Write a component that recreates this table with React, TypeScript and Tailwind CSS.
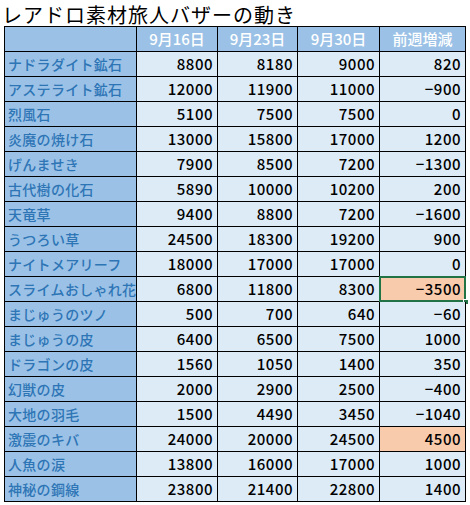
import React from "react";

const rows: [string, number, number, number, number, string?][] = [
  ["ナドラダイト鉱石", 8800, 8180, 9000, 820],
  ["アステライト鉱石", 12000, 11900, 11000, -900],
  ["烈風石", 5100, 7500, 7500, 0],
  ["炎魔の焼け石", 13000, 15800, 17000, 1200],
  ["げんませき", 7900, 8500, 7200, -1300],
  ["古代樹の化石", 5890, 10000, 10200, 200],
  ["天竜草", 9400, 8800, 7200, -1600],
  ["うつろい草", 24500, 18300, 19200, 900],
  ["ナイトメアリーフ", 18000, 17000, 17000, 0],
  ["スライムおしゃれ花", 6800, 11800, 8300, -3500, "sel"],
  ["まじゅうのツノ", 500, 700, 640, -60],
  ["まじゅうの皮", 6400, 6500, 7500, 1000],
  ["ドラゴンの皮", 1560, 1050, 1400, 350],
  ["幻獣の皮", 2000, 2900, 2500, -400],
  ["大地の羽毛", 1500, 4490, 3450, -1040],
  ["激震のキバ", 24000, 20000, 24500, 4500, "hi"],
  ["人魚の涙", 13800, 16000, 17000, 1000],
  ["神秘の鋼線", 23800, 21400, 22800, 1400],
];

const fmt = (n: number) => (n < 0 ? "\u2212" + Math.abs(n) : String(n));

export default function App() {
  return (
    <div
      className="w-[470px] h-[505px] bg-white overflow-hidden"
      style={{ fontFamily: '"Noto Sans CJK JP", "Noto Sans", sans-serif' }}
    >
      <div className="h-[26px] pl-[2px]">
        <div className="text-[20px] leading-[29px] text-black tracking-[1px] whitespace-nowrap">
          レアドロ素材旅人バザーの動き
        </div>
      </div>
      <div className="relative ml-[4px] w-[462px] border-l border-t border-black grid grid-cols-[132px_81px_80px_82px_86px] auto-rows-[25px]">
        <div className="bg-[#9bc2e6] border-r border-b border-black" />
        {["9月16日", "9月23日", "9月30日", "前週増減"].map((h) => (
          <div
            key={h}
            className="bg-[#9bc2e6] border-r border-b border-black text-white text-[15px] font-medium flex items-center justify-center"
          >
            {h}
          </div>
        ))}
        {rows.map((r) => (
          <React.Fragment key={r[0]}>
            <div className="bg-[#9bc2e6] border-r border-b border-black text-[#2e75b6] text-[14px] font-medium flex items-center pl-[3px] whitespace-nowrap tracking-[0.3px] overflow-hidden">
              {r[0]}
            </div>
            {[r[1], r[2], r[3]].map((v, i) => (
              <div
                key={i}
                className="bg-[#ddebf7] border-r border-b border-black text-black text-[15px] font-medium flex items-center justify-end pr-[4px] tracking-[0.5px]"
              >
                {fmt(v)}
              </div>
            ))}
            <div
              className={`relative border-r border-b border-black text-black text-[15px] font-medium flex items-center justify-end pr-[4px] tracking-[0.5px] ${
                r[5] ? "bg-[#f8cbad]" : "bg-[#ddebf7]"
              }`}
            >
              {fmt(r[4])}
              {r[5] === "sel" && (
                <>
                  <div className="absolute left-[-1px] top-[-1px] right-[-1px] bottom-[-1px] border-2 border-[#217346]" />
                  <div className="absolute right-[-4px] bottom-[-4px] w-[6px] h-[6px] bg-[#217346] border border-white" />
                </>
              )}
            </div>
          </React.Fragment>
        ))}
      </div>
    </div>
  );
}
